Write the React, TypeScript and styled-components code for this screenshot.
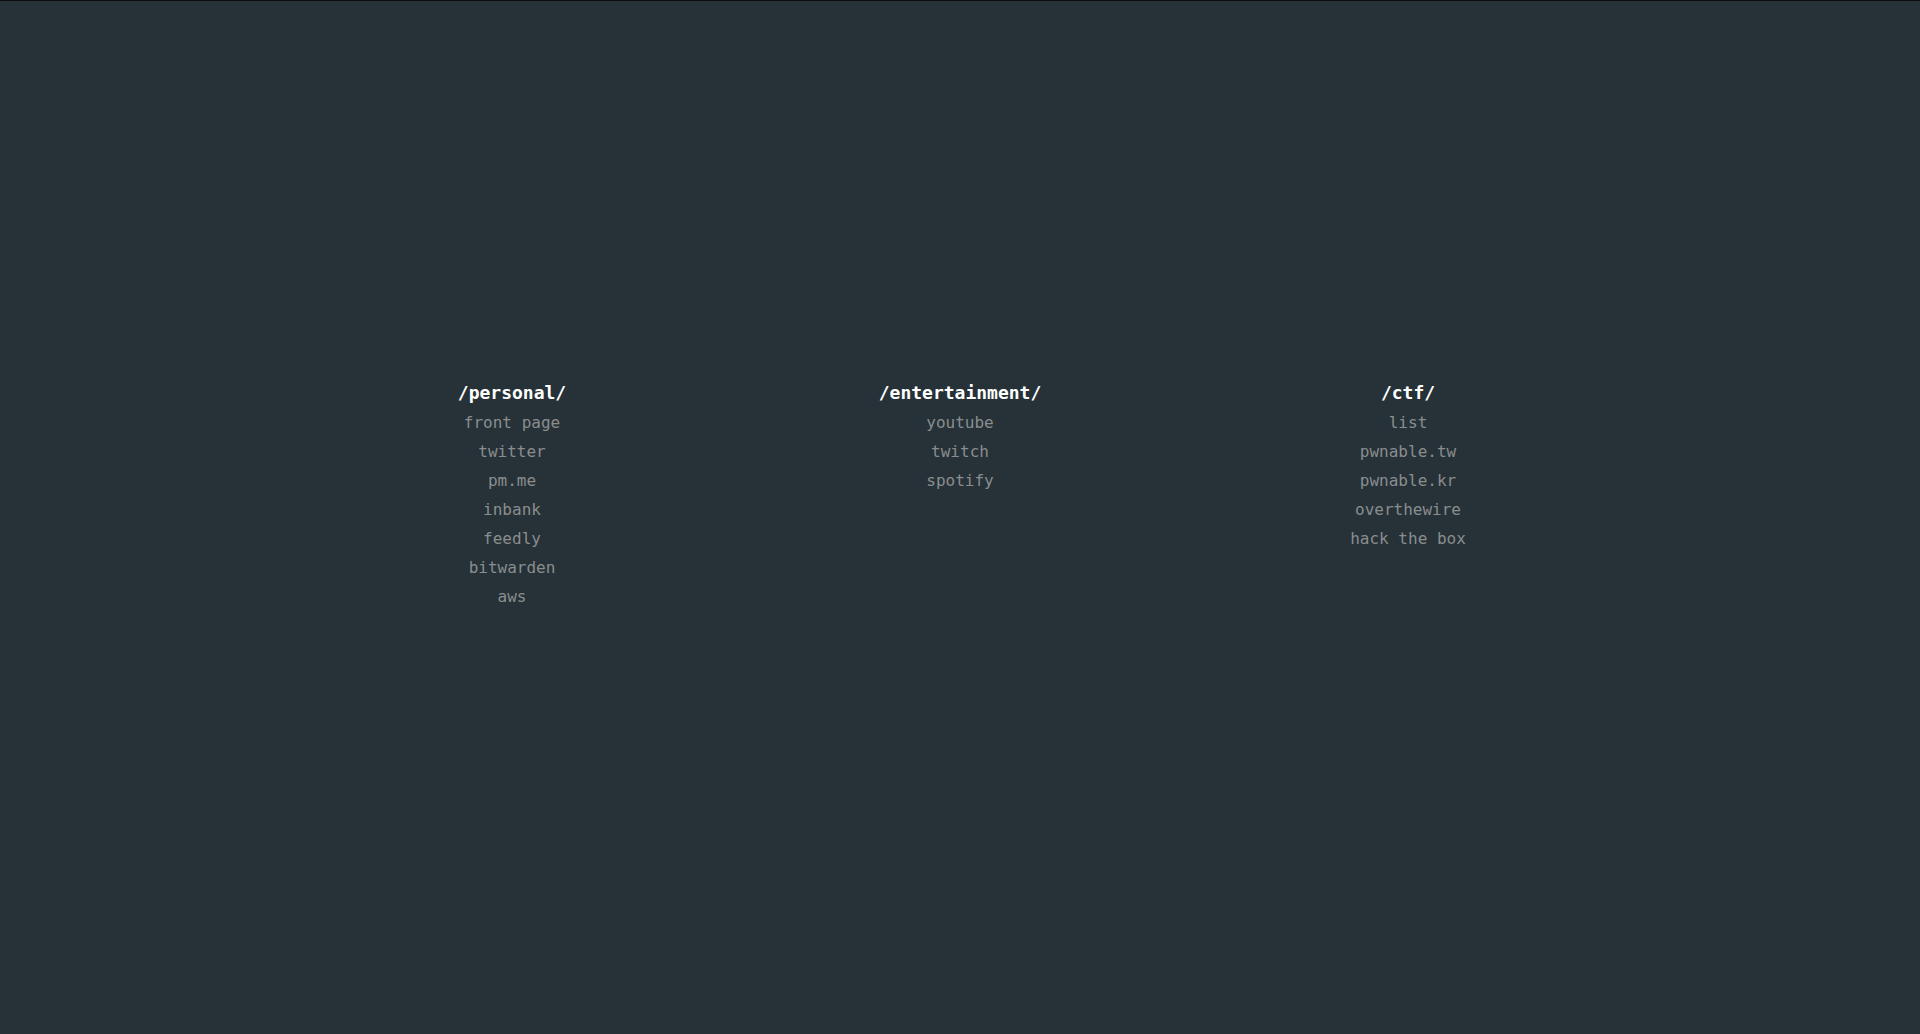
import React from "react";
import styled, { createGlobalStyle } from "styled-components";

const GlobalStyle = createGlobalStyle`
	html {
		background-color: #263238;
	}

	body {
		margin: 0;
		padding: 0;
		border-top: 1px solid #0b0d0e;
		font-family: "DejaVu Sans Mono", "Liberation Mono", monospace;
	}
`;

const Page = styled.main`
	width: 70%;
	margin: 0 auto;
	padding-top: 381px;
	display: grid;
	grid-template-columns: repeat(3, 1fr);
`;

const Column = styled.section`
	display: flex;
	flex-direction: column;
	align-items: center;
`;

const Heading = styled.h2`
	margin: 0 0 4px;
	font-size: 18px;
	line-height: 22px;
	font-weight: bold;
	color: #ffffff;
`;

const Link = styled.a`
	display: block;
	font-size: 16px;
	line-height: 29px;
	color: #8a8d8e;
	text-decoration: none;

	&:hover {
		color: #ffffff;
	}
`;

const sections = [
	{
		title: "/personal/",
		links: ["front page", "twitter", "pm.me", "inbank", "feedly", "bitwarden", "aws"],
	},
	{
		title: "/entertainment/",
		links: ["youtube", "twitch", "spotify"],
	},
	{
		title: "/ctf/",
		links: ["list", "pwnable.tw", "pwnable.kr", "overthewire", "hack the box"],
	},
];

const App = () => {
	return (
		<>
			<GlobalStyle />
			<Page>
				{sections.map((section) => (
					<Column key={section.title}>
						<Heading>{section.title}</Heading>
						{section.links.map((link) => (
							<Link key={link} href="#">
								{link}
							</Link>
						))}
					</Column>
				))}
			</Page>
		</>
	);
};

export default App;
